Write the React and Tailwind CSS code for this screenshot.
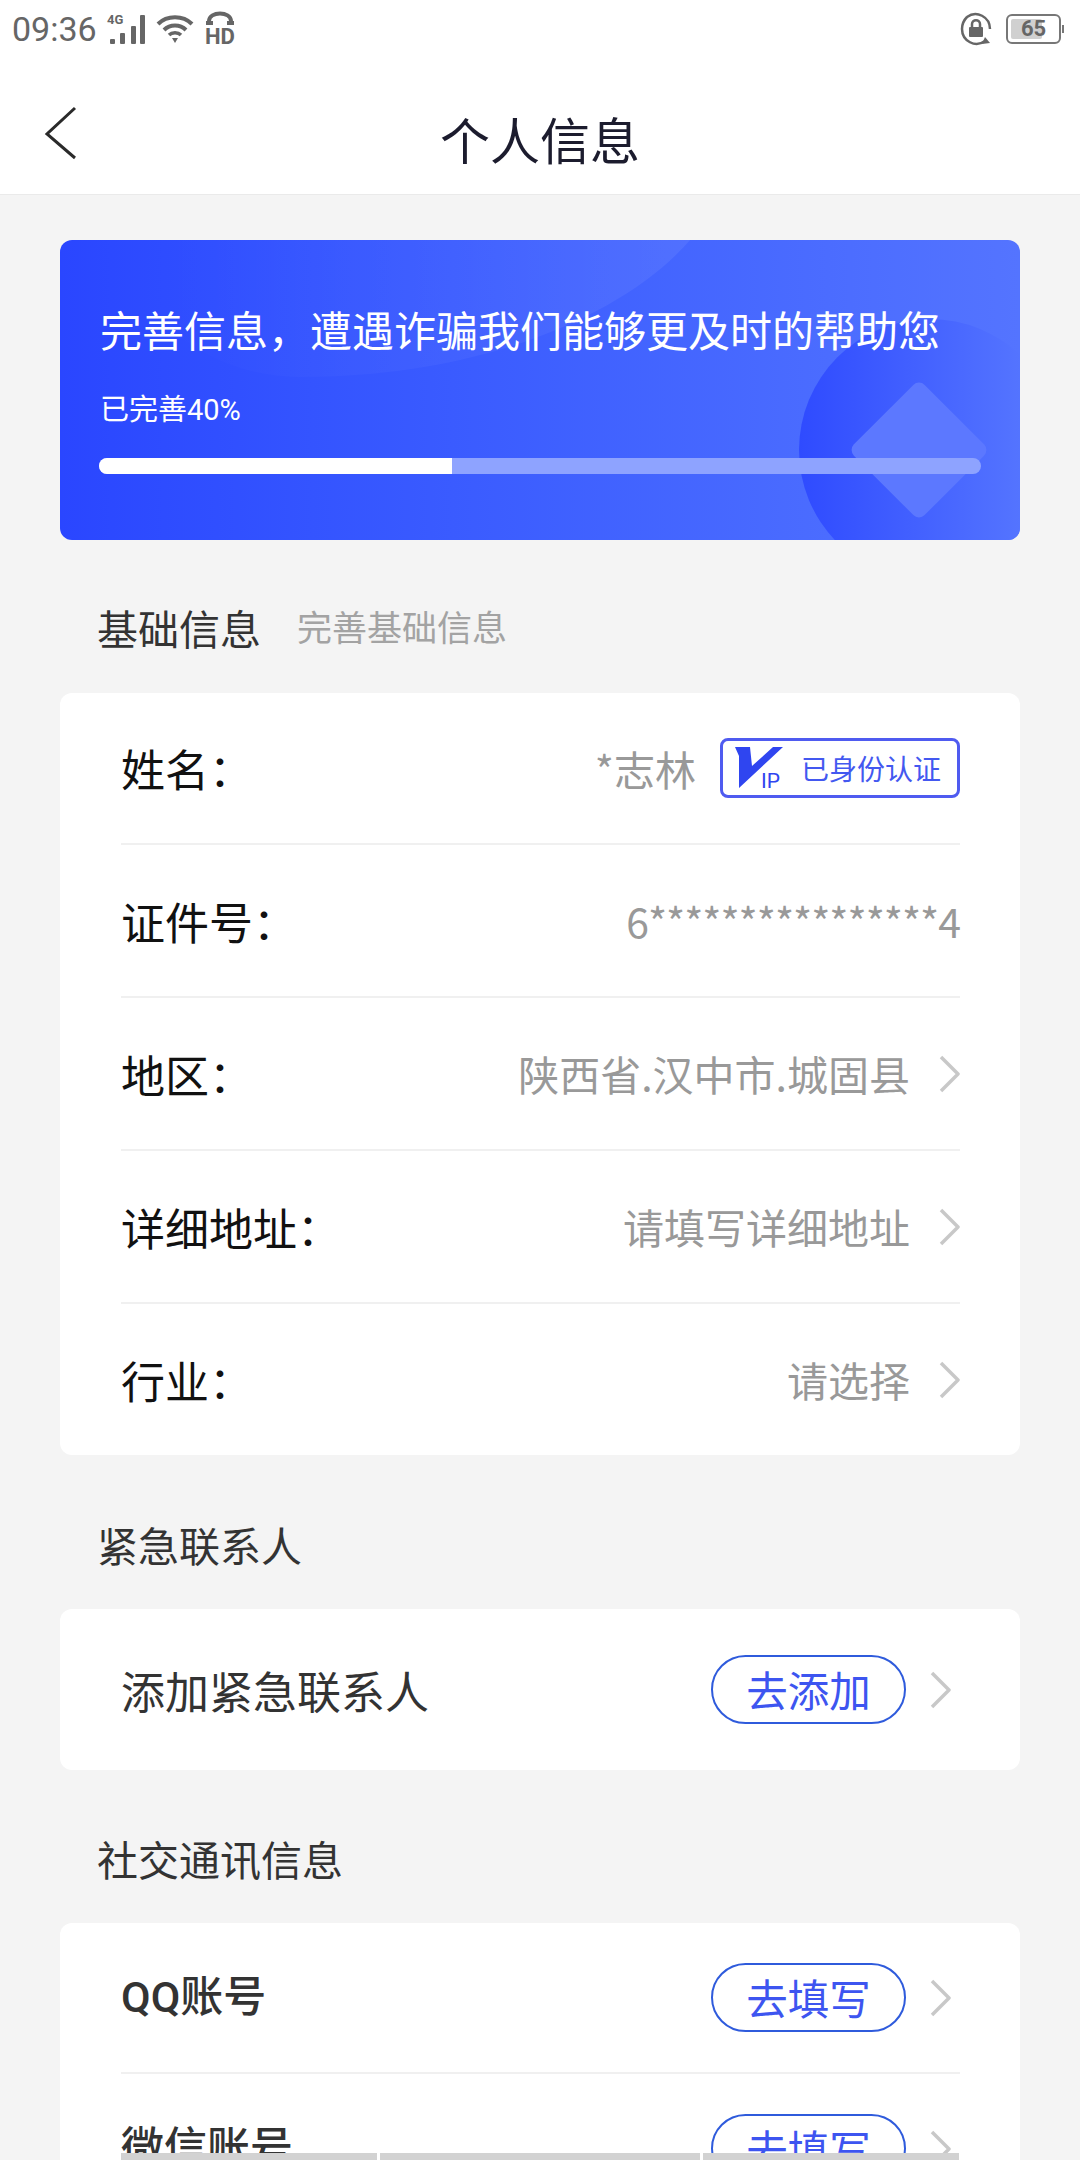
const CJK = "font-['Noto_Sans_CJK_SC','Noto_Sans',sans-serif]"

function Chevron({ className }) {
    return (
        <svg width="22" height="38" viewBox="0 0 22 38" fill="none" className={className}>
            <path d="M3 2 L20 19 L3 36" stroke="#c8c8c8" strokeWidth="3.5" strokeLinejoin="round" />
        </svg>
    )
}

function StatusBar() {
    return (
        <div className="flex h-[58px] items-center justify-between pl-[12px] pr-[16px] text-[#666666]">
            <div className="flex items-center">
                <span className="w-[84px] font-['Roboto',sans-serif] text-[34px] leading-none">09:36</span>
                {/* signal */}
                <svg width="38" height="32" viewBox="0 0 38 32" className="ml-[11px] overflow-visible">
                    <text x="0" y="11" fontSize="13" fontWeight="700" fill="#666666" fontFamily="Roboto">4G</text>
                    <rect x="3" y="26" width="5" height="5" rx="1" fill="#666666" />
                    <rect x="13" y="20" width="5" height="11" rx="1" fill="#666666" />
                    <rect x="24" y="13" width="5" height="18" rx="1" fill="#666666" />
                    <rect x="33" y="2" width="5" height="29" rx="1" fill="#666666" />
                </svg>
                {/* wifi */}
                <svg width="40" height="30" viewBox="0 0 40 30" fill="none" className="ml-[10px]">
                    <path d="M3 10 C12 1 28 1 37 10" stroke="#666666" strokeWidth="4" />
                    <path d="M9 16 C15 10 25 10 31 16" stroke="#666666" strokeWidth="4" />
                    <path d="M14 21 C17 18 23 18 26 21" stroke="#666666" strokeWidth="3.5" />
                    <path d="M17 24 L23 24 L20 29 Z" fill="#666666" />
                </svg>
                {/* hd */}
                <svg width="30" height="34" viewBox="0 0 30 34" fill="none" className="ml-[10px] overflow-visible">
                    <path d="M4 12 V9 C4 -1 26 -1 26 9 V12" stroke="#666666" strokeWidth="4" />
                    <rect x="1" y="9" width="7" height="4" fill="#666666" />
                    <rect x="22" y="9" width="7" height="4" fill="#666666" />
                    <text x="0" y="32" fontSize="22" fontWeight="700" fill="#666666" fontFamily="Roboto" textLength="30" lengthAdjust="spacingAndGlyphs">HD</text>
                </svg>
            </div>
            <div className="flex items-center">
                {/* rotation lock */}
                <svg width="32" height="34" viewBox="0 0 32 34" fill="none">
                    <path d="M7 5 A14.5 15 0 0 1 30 17 M25 29 A14.5 15 0 0 1 2 17 C2 12 4 8 7 5" stroke="#666666" strokeWidth="2.5" />
                    <path d="M25 25 L30 31 L22 32 Z" fill="#666666" />
                    <rect x="9" y="15" width="14" height="10" rx="1" fill="#666666" />
                    <path d="M12 15 V12 C12 7 20 7 20 12 V15" stroke="#666666" strokeWidth="2.5" />
                </svg>
                {/* battery */}
                <div className="ml-[14px] flex items-center">
                    <div className="relative flex h-[30px] w-[55px] items-center justify-center rounded-[6px] border-2 border-[#777777] p-[2px]">
                        <div className="absolute inset-y-[3px] left-[3px] w-[31px] rounded-[2px] bg-[#d0d0d0]" />
                        <span className="relative font-['Roboto',sans-serif] text-[22px] font-bold leading-none text-[#666666]">65</span>
                    </div>
                    <div className="ml-[1px] h-[8px] w-[2px] bg-[#777777]" />
                </div>
            </div>
        </div>
    )
}

function Header() {
    return (
        <div className="relative flex h-[137px] items-center justify-center border-b border-[#eaeaea] bg-white">
            <svg width="34" height="56" viewBox="0 0 34 56" fill="none" className="absolute left-[44px] top-[47px]">
                <path d="M31 3 L3 29 L31 53" stroke="#2a2a2a" strokeWidth="3" />
            </svg>
            <h1 className="pt-[24px] text-[50px] font-normal leading-none text-[#1c1c2e]">个人信息</h1>
        </div>
    )
}

function Banner() {
    return (
        <div className="relative h-[300px] overflow-hidden rounded-[12px] bg-gradient-to-r from-[#2a46ff] to-[#5474ff]">
            {/* decoration */}
            <svg width="960" height="300" viewBox="0 0 960 300" fill="none" className="absolute left-0 top-0">
                <defs>
                    <linearGradient id="blob" x1="100" y1="0" x2="650" y2="0" gradientUnits="userSpaceOnUse">
                        <stop stopColor="#ffffff" stopOpacity="0" />
                        <stop offset="1" stopColor="#ffffff" stopOpacity="0.07" />
                    </linearGradient>
                    <linearGradient id="fade" x1="739" y1="0" x2="960" y2="0" gradientUnits="userSpaceOnUse">
                        <stop stopColor="#2f4bff" />
                        <stop offset="1" stopColor="#5474ff" />
                    </linearGradient>
                </defs>
                <path d="M100 0 H630 C570 70 430 137 240 137 C180 137 130 110 100 80 Z" fill="url(#blob)" />
                <circle cx="870" cy="210" r="131" fill="url(#fade)" />
                <rect x="-50" y="-50" width="100" height="100" rx="8" transform="translate(859 210) rotate(45)" fill="#5c78ff" />
            </svg>
            <div className="relative flex flex-col px-[40px]">
                <p className="mt-[68px] whitespace-nowrap text-[42px] leading-none text-white">完善信息，遭遇诈骗我们能够更及时的帮助您</p>
                <p className="mt-[46px] font-['Roboto','Noto_Sans_CJK_SC',sans-serif] text-[29px] leading-none text-white">已完善40%</p>
                <div className="ml-[-1px] mt-[33px] h-[16px] w-[882px] overflow-hidden rounded-full bg-[#8ea3ff]">
                    <div className="h-full w-[40%] bg-white" />
                </div>
            </div>
        </div>
    )
}

function SectionTitle({ title, hint }) {
    return (
        <div className="flex items-center px-[37px]">
            <span className="text-[41px] leading-[40px] text-[#333333]">{title}</span>
            {hint && <span className="mb-[4px] ml-[36px] text-[35px] leading-none text-[#a3a3a3]">{hint}</span>}
        </div>
    )
}

function Row({ label, value, last, children, chevron, height = "h-[153px]", tight }) {
    return (
        <div className={`flex items-center justify-between ${height} ${last ? "" : "border-b-2 border-[#f0f0f0]"}`}>
            <span className="text-[44px] leading-none text-[#111111]">{label}</span>
            <div className="flex items-center">
                {value && <span className={`text-[41px] leading-none text-[#999999] ${tight ? "tracking-[-1px]" : ""}`}>{value}</span>}
                {children}
                {chevron && <Chevron className="ml-[28px]" />}
            </div>
        </div>
    )
}

function PillButton({ text }) {
    return (
        <div className="flex h-[69px] w-[195px] items-center justify-center rounded-full border-2 border-[#2f5bdc] text-[41.5px] leading-none text-[#3d55f0]">
            {text}
        </div>
    )
}

function ActionRow({ label, action, last }) {
    return (
        <div className={`flex items-center justify-between ${last ? "h-[149px]" : "h-[151px] border-b-2 border-[#f0f0f0]"}`}>
            <span className="font-['Roboto','Noto_Sans_CJK_SC',sans-serif] text-[43px] font-medium leading-none text-[#333333]">{label}</span>
            <div className="flex items-center">
                <PillButton text={action} />
                <Chevron className="ml-[23px] mr-[9px]" />
            </div>
        </div>
    )
}

export default function App() {
    return (
        <div className={`relative h-[2160px] w-[1080px] overflow-hidden bg-[#f4f4f4] ${CJK}`}>
            <div className="bg-white">
                <StatusBar />
                <Header />
            </div>

            <div className="px-[60px] pt-[45px]">
                <Banner />

                <div className="mt-[67px]">
                    <SectionTitle title="基础信息" hint="完善基础信息" />
                </div>

                <div className="mt-[46px] rounded-[12px] bg-white pl-[61px] pr-[60px]">
                    <Row label="姓名：" value="*志林" height="h-[152px]">
                        <div className="ml-[24px] flex h-[60px] w-[240px] items-center rounded-[8px] border-[3px] border-[#4f5bf0] pl-[12px]">
                            <svg width="50" height="42" viewBox="0 0 50 42" className="overflow-visible">
                                <path d="M0 0 H15 L17 19 L38 0 H48 L4 41 V9 Z" fill="#2f45f0" />
                                <text x="26" y="41" fontSize="21" fill="#2f45f0" fontFamily="Roboto">IP</text>
                            </svg>
                            <span className="ml-[16px] text-[28px] leading-none text-[#4358f0]">已身份认证</span>
                        </div>
                    </Row>
                    <Row label="证件号：" value="6****************4" tight />
                    <Row label="地区：" value="陕西省.汉中市.城固县" chevron />
                    <Row label="详细地址：" value="请填写详细地址" chevron />
                    <Row label="行业：" value="请选择" chevron last height="h-[151px]" />
                </div>

                <div className="mt-[69px]">
                    <SectionTitle title="紧急联系人" />
                </div>

                <div className="mt-[45px] rounded-[12px] bg-white pl-[61px] pr-[60px]">
                    <div className="flex h-[161px] items-center justify-between">
                        <span className="text-[44px] leading-none text-[#333333]">添加紧急联系人</span>
                        <div className="flex items-center">
                            <PillButton text="去添加" />
                            <Chevron className="ml-[23px] mr-[9px]" />
                        </div>
                    </div>
                </div>

                <div className="mt-[68px]">
                    <SectionTitle title="社交通讯信息" />
                </div>

                <div className="mt-[45px] rounded-[12px] bg-white pl-[61px] pr-[60px]">
                    <ActionRow label="QQ账号" action="去填写" />
                    <ActionRow label="微信账号" action="去填写" last />
                </div>
            </div>

            {/* gesture bar at the bottom edge */}
            <div className="absolute inset-x-[121px] bottom-0 flex h-[7px] gap-[3px]">
                <div className="w-[256px] bg-[#d2d2d2]" />
                <div className="w-[320px] bg-[#d2d2d2]" />
                <div className="flex-1 bg-[#d2d2d2]" />
            </div>
        </div>
    )
}
